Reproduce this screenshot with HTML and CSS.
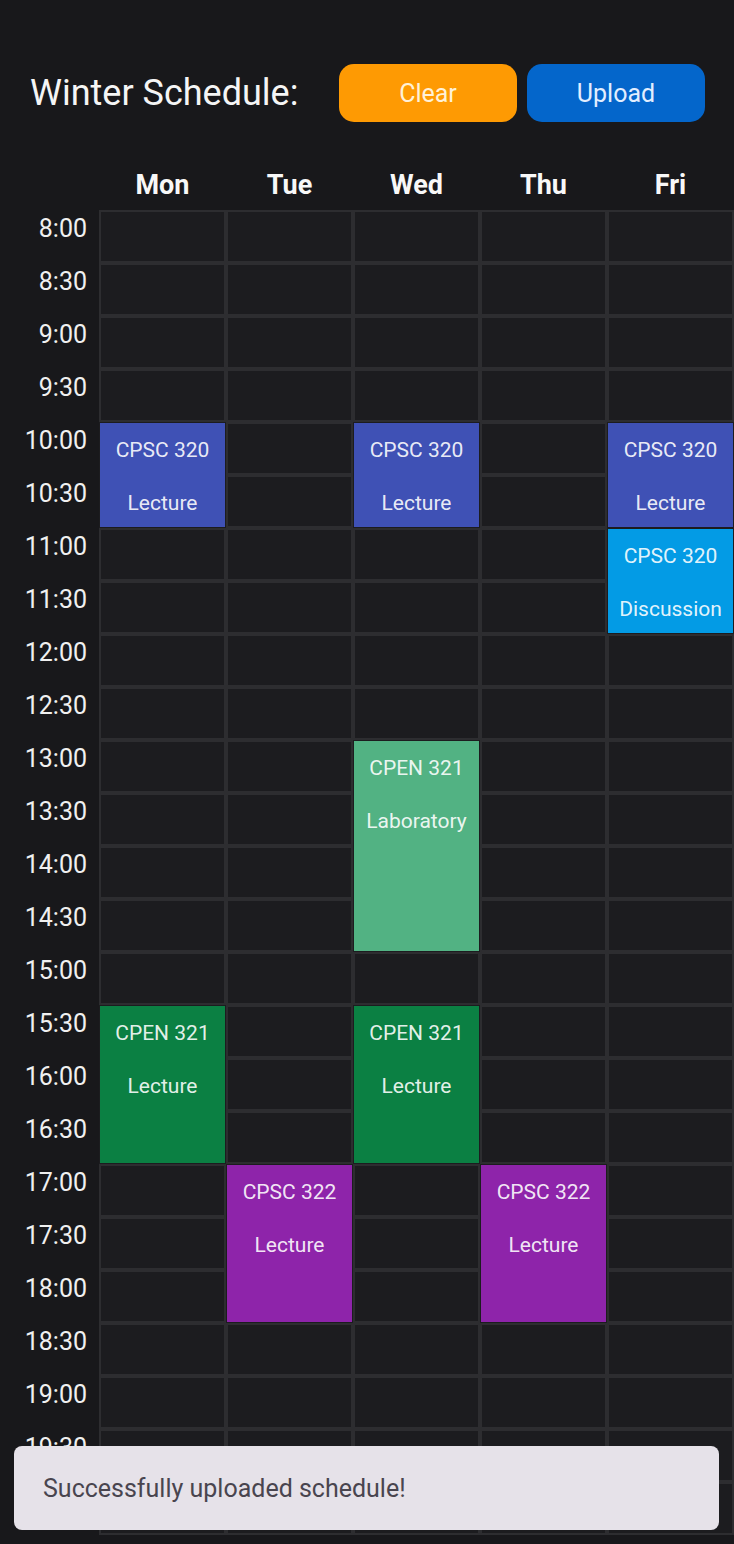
FILE: index.html
```html
<!DOCTYPE html>
<html lang="en">
<head>
<meta charset="utf-8">
<title>Winter Schedule</title>
<link rel="stylesheet" href="styles.css">
</head>
<body>
<div class="page">
  <header class="topbar">
    <h1 class="title">Winter Schedule:</h1>
    <button class="btn btn-clear">Clear</button>
    <button class="btn btn-upload">Upload</button>
  </header>

  <section class="schedule">
    <div class="times">
      <div class="t">8:00</div><div class="t">8:30</div><div class="t">9:00</div><div class="t">9:30</div>
      <div class="t">10:00</div><div class="t">10:30</div><div class="t">11:00</div><div class="t">11:30</div>
      <div class="t">12:00</div><div class="t">12:30</div><div class="t">13:00</div><div class="t">13:30</div>
      <div class="t">14:00</div><div class="t">14:30</div><div class="t">15:00</div><div class="t">15:30</div>
      <div class="t">16:00</div><div class="t">16:30</div><div class="t">17:00</div><div class="t">17:30</div>
      <div class="t">18:00</div><div class="t">18:30</div><div class="t">19:00</div><div class="t">19:30</div>
      <div class="t">20:00</div>
    </div>

    <div class="day">
      <div class="dh">Mon</div>
      <div class="c"></div><div class="c"></div><div class="c"></div><div class="c"></div>
      <div class="ev ev-indigo span2"><span>CPSC 320</span><span>Lecture</span></div>
      <div class="c"></div><div class="c"></div><div class="c"></div><div class="c"></div><div class="c"></div>
      <div class="c"></div><div class="c"></div><div class="c"></div><div class="c"></div>
      <div class="ev ev-basil span3"><span>CPEN 321</span><span>Lecture</span></div>
      <div class="c"></div><div class="c"></div><div class="c"></div><div class="c"></div><div class="c"></div>
      <div class="c"></div><div class="c"></div>
    </div>

    <div class="day">
      <div class="dh">Tue</div>
      <div class="c"></div><div class="c"></div><div class="c"></div><div class="c"></div><div class="c"></div><div class="c"></div>
      <div class="c"></div><div class="c"></div><div class="c"></div><div class="c"></div><div class="c"></div><div class="c"></div>
      <div class="c"></div><div class="c"></div><div class="c"></div><div class="c"></div><div class="c"></div><div class="c"></div>
      <div class="ev ev-grape span3"><span>CPSC 322</span><span>Lecture</span></div>
      <div class="c"></div><div class="c"></div><div class="c"></div><div class="c"></div>
    </div>

    <div class="day">
      <div class="dh">Wed</div>
      <div class="c"></div><div class="c"></div><div class="c"></div><div class="c"></div>
      <div class="ev ev-indigo span2"><span>CPSC 320</span><span>Lecture</span></div>
      <div class="c"></div><div class="c"></div><div class="c"></div><div class="c"></div>
      <div class="ev ev-sage span4"><span>CPEN 321</span><span>Laboratory</span></div>
      <div class="c"></div>
      <div class="ev ev-basil span3"><span>CPEN 321</span><span>Lecture</span></div>
      <div class="c"></div><div class="c"></div><div class="c"></div><div class="c"></div><div class="c"></div>
      <div class="c"></div><div class="c"></div>
    </div>

    <div class="day">
      <div class="dh">Thu</div>
      <div class="c"></div><div class="c"></div><div class="c"></div><div class="c"></div><div class="c"></div><div class="c"></div>
      <div class="c"></div><div class="c"></div><div class="c"></div><div class="c"></div><div class="c"></div><div class="c"></div>
      <div class="c"></div><div class="c"></div><div class="c"></div><div class="c"></div><div class="c"></div><div class="c"></div>
      <div class="ev ev-grape span3"><span>CPSC 322</span><span>Lecture</span></div>
      <div class="c"></div><div class="c"></div><div class="c"></div><div class="c"></div>
    </div>

    <div class="day">
      <div class="dh">Fri</div>
      <div class="c"></div><div class="c"></div><div class="c"></div><div class="c"></div>
      <div class="ev ev-indigo span2"><span>CPSC 320</span><span>Lecture</span></div>
      <div class="ev ev-peacock span2"><span>CPSC 320</span><span>Discussion</span></div>
      <div class="c"></div><div class="c"></div><div class="c"></div><div class="c"></div><div class="c"></div><div class="c"></div>
      <div class="c"></div><div class="c"></div><div class="c"></div><div class="c"></div><div class="c"></div><div class="c"></div>
      <div class="c"></div><div class="c"></div><div class="c"></div><div class="c"></div><div class="c"></div>
    </div>
  </section>
</div>

<div class="toast">Successfully uploaded schedule!</div>
</body>
</html>
```

FILE: styles.css
```css
* { box-sizing: border-box; }

html, body {
  margin: 0;
  padding: 0;
  background: #18181b;
  height: 1544px;
  overflow: hidden;
  font-family: Roboto, "Noto Sans", "Liberation Sans", sans-serif;
  color: #f4f4f4;
}

.page {
  padding-top: 64px;
}

.topbar {
  display: flex;
  align-items: center;
  height: 58px;
  padding: 0 29px 0 30px;
}

.title {
  flex: 1;
  margin: 0;
  font-size: 36px;
  font-weight: 400;
  color: #f5f5f5;
  line-height: 58px;
}

.btn {
  width: 178px;
  height: 58px;
  border: none;
  border-radius: 15px;
  font-family: inherit;
  font-size: 25px;
  padding: 0;
}

.btn-clear {
  background: #fe9a03;
  color: #fff1d8;
  margin-right: 10px;
}

.btn-upload {
  background: #0466cb;
  color: #e2eeff;
}

.schedule {
  display: flex;
  margin-top: 36px;
}

.times {
  width: 99px;
  padding-top: 53px;
  display: flex;
  flex-direction: column;
}

.t {
  height: 53px;
  line-height: 36px;
  font-size: 25px;
  text-align: right;
  padding-right: 12px;
  color: #f0f0f0;
}

.times .t:last-child { height: 52px; }

.day {
  width: 127px;
  display: flex;
  flex-direction: column;
}

.dh {
  height: 52px;
  line-height: 54px;
  text-align: center;
  font-size: 27px;
  font-weight: 700;
  color: #f8f8f8;
}

.c {
  height: 53px;
  background: #1c1c1f;
  border: 2px solid #2d2d30;
}

.ev {
  display: flex;
  flex-direction: column;
  align-items: center;
  border: 1px solid #1c1c1f;
  padding-top: 1px;
  color: rgba(255, 255, 255, 0.9);
  font-size: 21px;
}

.ev span {
  line-height: 53px;
}

.span2 { height: 106px; }
.span3 { height: 159px; }
.span4 { height: 212px; }

.ev-indigo  { background: #3f51b5; }
.ev-peacock { background: #039be5; }
.ev-sage    { background: #52b283; }
.ev-basil   { background: #0b8043; }
.ev-grape   { background: #8e24aa; }

.toast {
  position: fixed;
  left: 14px;
  right: 15px;
  bottom: 14px;
  height: 84px;
  display: flex;
  align-items: center;
  padding-left: 29px;
  background: #e6e2e9;
  border-radius: 8px;
  color: #49454f;
  font-size: 25px;
}
```
